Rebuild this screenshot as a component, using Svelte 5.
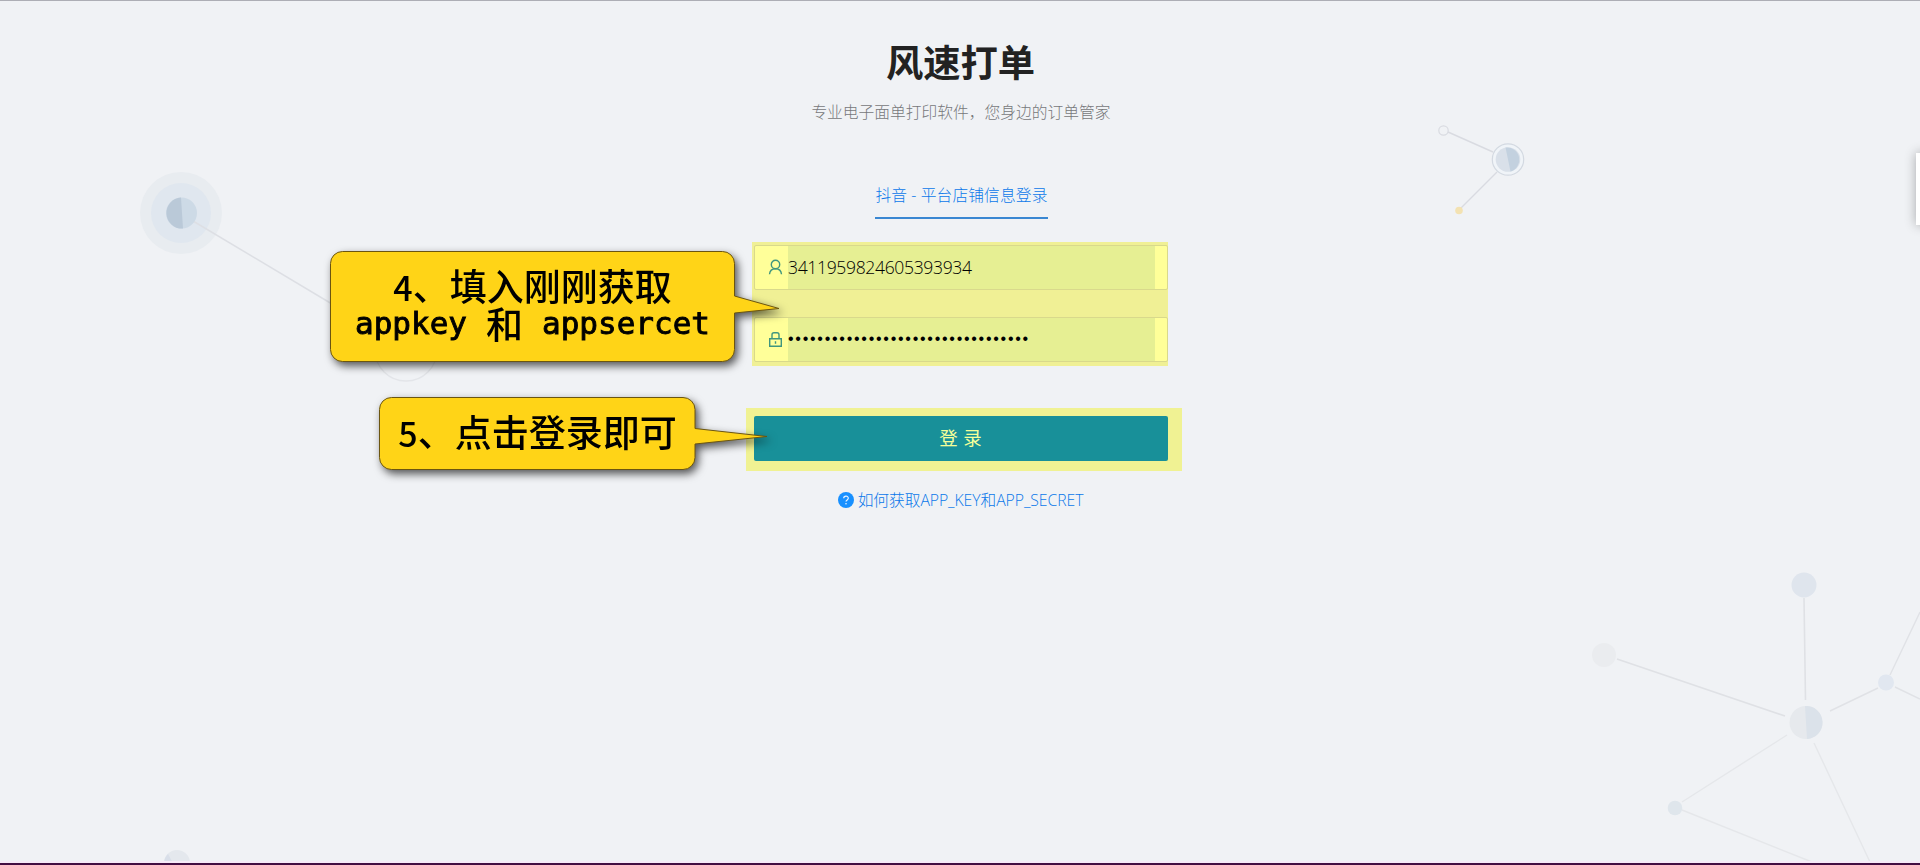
<script>
    let account = "3411959824605393934";
    let password = "•".repeat(33);
</script>

<div class="page">
    <svg class="network" width="1920" height="865" viewBox="0 0 1920 865" fill="none">
        <!-- left -->
        <circle cx="181" cy="213" r="41" fill="#e8ecf0" />
        <circle cx="181" cy="213" r="30" fill="#e0e7ef" />
        <path d="M193 221L332 304" stroke="#dddfe4" stroke-width="1.5" />
        <circle cx="181.500" cy="213" r="15.500" fill="#cddae6" />
        <path d="M181 197.500A15.500 15.500 0 0 0 183 228.500Z" fill="#bac9d8" />
        <circle cx="406" cy="350" r="31" stroke="#e3e5e9" stroke-width="1.3" />
        <circle cx="177" cy="863" r="13" fill="#e4e8ed" />
        <path d="M164 863A13 13 0 0 1 168 854L173 863Z" fill="#d9dfe9" />
        <!-- top right -->
        <path d="M1448 132L1493 152M1497 172L1461 208" stroke="#d9dbe1" stroke-width="1.4" />
        <circle cx="1443.500" cy="130.500" r="4.700" stroke="#d9dbe1" stroke-width="1.2" />
        <circle cx="1459" cy="210.500" r="3.800" fill="#f3e2b2" />
        <circle cx="1508" cy="159.500" r="15.700" fill="#f0f4f8" stroke="#d3d9e1" stroke-width="1.2" />
        <circle cx="1508" cy="159.500" r="12.300" fill="#d9e0e9" />
        <path d="M1505.500 147.500A12.300 12.300 0 0 1 1510.500 171.500Z" fill="#c3d1df" />
        <!-- bottom right -->
        <path d="M1617 659L1785 716M1804 598L1805.500 700" stroke="#dfe1e5" stroke-width="1.6" />
        <path d="M1830 711L1878 688M1895 687L1920 699M1890 675L1920 612" stroke="#e0e2e6" stroke-width="1.4" />
        <path d="M1787 735L1682 802M1682 810L1812 862M1814 743L1870 862" stroke="#e5e7ea" stroke-width="1.4" />
        <circle cx="1604" cy="655" r="12" fill="#eaecef" />
        <circle cx="1804" cy="585" r="12.500" fill="#dfe5ed" />
        <circle cx="1886" cy="682.500" r="8" fill="#e1e7f0" />
        <circle cx="1675" cy="808" r="7.300" fill="#dfe6ec" />
        <circle cx="1806" cy="722.500" r="16.500" fill="#e6e9ed" />
        <path d="M1805 706A16.500 16.500 0 0 1 1807 739Z" fill="#dbe2ea" />
    </svg>

    <main>
        <h1>风速打单</h1>
        <p class="desc">专业电子面单打印软件，您身边的订单管家</p>
        <div class="tab">抖音 - 平台店铺信息登录</div>

        <div class="fields">
            <div class="field">
                <svg width="16" height="18" viewBox="0 0 16 18" fill="none" stroke="#3f967f" stroke-width="1.4">
                    <circle cx="8.500" cy="5.500" r="4.200" />
                    <path d="M2.500 15.300C2.800 12.100 5.100 9.700 8.500 9.700S14.200 12.100 14.500 15.300" />
                </svg>
                <div class="value">{account}</div>
            </div>
            <div class="field">
                <svg width="16" height="18" viewBox="0 0 16 18" fill="none" stroke="#3f967f" stroke-width="1.4">
                    <path d="M2.700 7.700H14.300V15.300H2.700ZM5 7.500V3.700Q5 1.700 7 1.700H10Q12 1.700 12 3.700V7.500M8.500 10.300V12.700" />
                </svg>
                <div class="value dots">{password}</div>
            </div>
        </div>

        <div class="submit">
            <button>登 录</button>
        </div>

        <a class="help" href="#help">
            <svg width="16" height="16" viewBox="0 0 16 16" fill="none">
                <circle cx="8" cy="8" r="8" fill="#1890ff" />
                <path d="M5.700 6.300C5.700 3.400 10.300 3.400 10.300 6.200C10.300 7.900 8 7.900 8 9.600" stroke="#e9f3ff" stroke-width="1.2" />
                <circle cx="8" cy="11.700" r=".8" fill="#e9f3ff" />
            </svg>
            <span>如何获取APP_KEY和APP_SECRET</span>
        </a>
    </main>

    <!-- guide callouts -->
    <div class="callout first">
        <svg width="450" height="111" viewBox="0 0 450 111">
            <path d="M12.500 .5H392.500A12 12 0 0 1 404.500 12.500V45L449 57.500L404.500 62V98.500A12 12 0 0 1 392.500 110.500H12.500A12 12 0 0 1 .5 98.500V12.500A12 12 0 0 1 12.500 .5Z" />
        </svg>
        <div class="note">
            <div><b>4</b>、填入刚刚获取</div>
            <div class="keys"><i>appkey</i><span>和</span><i>appsercet</i></div>
        </div>
    </div>
    <div class="callout second">
        <svg width="390" height="73" viewBox="0 0 390 73">
            <path d="M12.500 .5H304A12 12 0 0 1 316 12.500V31.500L388 39.500L316 47V60.500A12 12 0 0 1 304 72.500H12.500A12 12 0 0 1 .5 60.500V12.500A12 12 0 0 1 12.500 .5Z" />
        </svg>
        <div class="note">
            <div><b>5</b>、点击登录即可</div>
        </div>
    </div>

    <div class="side"></div>
    <div class="bottom"></div>
</div>

<style>
    :global(body) {
        margin: 0;
        overflow: hidden;
    }
    .page {
        position: relative;
        box-sizing: border-box;
        height: 865px;
        overflow: hidden;
        background: #f0f2f5;
        border-top: 1px solid #adaeb5;
        font-family: "Open Sans", "Noto Sans CJK SC", sans-serif;
    }
    .network {
        position: absolute;
        left: 0;
        top: -1px;
    }
    main {
        position: relative;
        display: flex;
        flex-direction: column;
        align-items: center;
        width: 436px;
        margin: 0 auto;
        left: 4px;
        padding-top: 35px;
    }
    h1 {
        margin: 0 7px 0 0;
        color: #222;
        font-size: 37.3px;
        line-height: 50px;
        font-weight: 700;
        font-family: "Noto Sans CJK SC", sans-serif;
    }
    .desc {
        margin: 14px 6px 0 0;
        color: #77787b;
        font-size: 15.75px;
        line-height: 24px;
        font-weight: 300;
        white-space: nowrap;
    }
    .tab {
        box-sizing: border-box;
        width: 173px;
        height: 43px;
        margin: 52px 5px 0 0;
        border-bottom: 2px solid #3a87d2;
        color: #0a78ea;
        font-size: 15.75px;
        line-height: 38px;
        font-weight: 300;
        letter-spacing: 0.1px;
        text-align: center;
        white-space: nowrap;
    }
    .fields {
        box-sizing: border-box;
        width: 416px;
        height: 124px;
        margin: 23px 8px 0 0;
        padding: 3px 0 4px 2px;
        display: flex;
        flex-direction: column;
        justify-content: space-between;
        background: #f0f095;
    }
    .field {
        box-sizing: border-box;
        height: 45px;
        padding: 0 12px;
        display: flex;
        align-items: center;
        background: #ffff99;
        border: 1px solid #d9d98c;
        border-radius: 2px;
    }
    .field svg {
        flex: none;
        margin: 0 5px 0 0;
    }
    .value {
        flex: 1;
        height: 43px;
        color: #000;
        font-size: 17.5px;
        letter-spacing: -0.32px;
        line-height: 42px;
        font-weight: 300;
        background: #e6ef93;
    }
    .dots {
        font-family: "Liberation Sans", sans-serif;
        font-size: 16px;
        line-height: 41px;
        letter-spacing: 1.73px;
    }
    .submit {
        box-sizing: border-box;
        width: 436px;
        height: 63px;
        margin-top: 42px;
        padding: 8px 14px 10px 8px;
        background: #f0f293;
    }
    button {
        display: block;
        width: 414px;
        height: 45px;
        padding: 0 1px 3px 0;
        border: 0;
        border-radius: 2px;
        background: #189099;
        color: #f5ff99;
        font: 400 18.500px "Open Sans", "Noto Sans CJK SC", sans-serif;
        word-spacing: 0.5px;
    }
    .help {
        display: flex;
        align-items: center;
        gap: 4px;
        height: 24px;
        margin: 17px 7px 0 0;
        color: #0a78ea;
        font-size: 15.75px;
        line-height: 24px;
        font-weight: 300;
        letter-spacing: -0.06px;
        white-space: nowrap;
        text-decoration: none;
    }
    .callout {
        position: absolute;
        filter: drop-shadow(3px 4px 4px rgba(0, 0, 0, 0.65));
    }
    .callout svg {
        display: block;
        fill: #ffd417;
        stroke: #6b5510;
        stroke-width: 1;
    }
    .first {
        left: 330px;
        top: 250px;
    }
    .second {
        left: 379px;
        top: 396px;
    }
    .note {
        position: absolute;
        left: 0;
        top: 16px;
        width: 405px;
        display: flex;
        flex-direction: column;
        align-items: center;
        color: #000;
        font-family: "Noto Sans CJK SC", sans-serif;
        font-size: 37px;
        line-height: 36px;
        font-weight: 500;
        white-space: nowrap;
    }
    .second .note {
        width: 317px;
    }
    .note b {
        font-weight: 500;
        font-size: 34px;
    }
    .keys {
        display: flex;
        gap: 19px;
    }
    .note i {
        font-style: normal;
        font-family: "DejaVu Sans Mono", monospace;
        font-size: 31px;
        line-height: 37px;
        -webkit-text-stroke: 0.9px #000;
    }
    .side {
        position: absolute;
        left: 1916px;
        top: 152px;
        width: 20px;
        height: 72px;
        background: #fff;
        box-shadow: 0 0 12px rgba(0, 0, 0, 0.3);
    }
    .bottom {
        position: absolute;
        left: 0;
        right: 0;
        bottom: 0;
        height: 2px;
        background: #430d42;
        box-shadow: 0 -2px #f7eaf8;
    }
</style>
